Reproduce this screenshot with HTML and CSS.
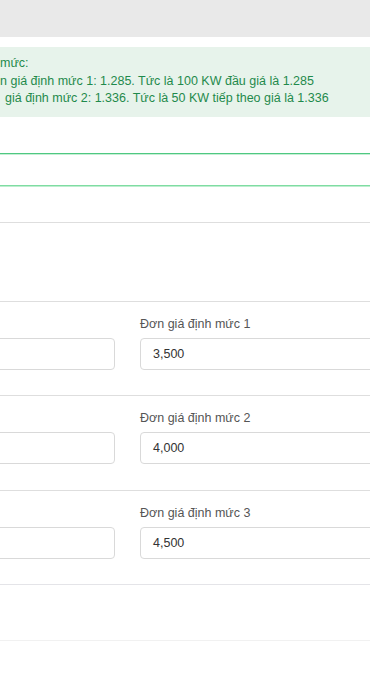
FILE: index.html
```html
<!DOCTYPE html>
<html lang="vi">
<head>
  <meta charset="UTF-8">
  <title>Đơn giá định mức</title>
  <link rel="stylesheet" href="styles.css">
</head>
<body>

  <div class="topbar"></div>

  <div class="notice">
    <div>mức:</div>
    <div>n giá định mức 1: 1.285. Tức là 100 KW đầu giá là 1.285</div>
    <div class="indent">giá định mức 2: 1.336. Tức là 50 KW tiếp theo giá là 1.336</div>
  </div>

  <div class="valid-field"></div>

  <div class="section blank"></div>

  <div class="section">
    <div class="row">
      <div class="input"></div>
      <div class="field">
        <label>Đơn giá định mức 1</label>
        <div class="input">3,500</div>
      </div>
    </div>
  </div>

  <div class="section">
    <div class="row">
      <div class="input"></div>
      <div class="field">
        <label>Đơn giá định mức 2</label>
        <div class="input">4,000</div>
      </div>
    </div>
  </div>

  <div class="section">
    <div class="row">
      <div class="input"></div>
      <div class="field">
        <label>Đơn giá định mức 3</label>
        <div class="input">4,500</div>
      </div>
    </div>
  </div>

  <div class="section footer"></div>

</body>
</html>
```

FILE: styles.css
```css
* {
  margin: 0;
  padding: 0;
  box-sizing: border-box;
}

body {
  width: 370px;
  overflow: hidden;
  background: #fff;
  font-family: 'Liberation Sans', Arial, sans-serif;
  font-size: 12.5px;
  color: #333;
}

.topbar {
  height: 37px;
  background: #e9e9e9;
}

.notice {
  margin-top: 10px;
  padding: 8px 0 9px;
  background: #e7f3eb;
  color: #1f8a4c;
  line-height: 17.5px;
  white-space: nowrap;
}

.notice .indent {
  padding-left: 5px;
}

/* green focus / valid state */
.valid-field {
  margin-top: 36px;
  height: 33px;
  border-top: 1px solid #4fc882;
  border-bottom: 1px solid #7fdca2;
  box-shadow: inset 0 1px 0 #c6efd5, 0 1px 0 #bdeecf;
}

.section {
  border-top: 1px solid #dedede;
  padding: 15px 0 25.5px;
}

.section.blank {
  margin-top: 36px;
  height: 79px;
  padding: 0;
}

.section.footer {
  height: 57px;
  padding: 0;
  border-top-color: #e4e4e8;
  border-bottom: 1px solid #f1f1f1;
}

.row {
  display: grid;
  grid-template-columns: 135px 260px;
  gap: 25px;
  margin-left: -20px;
  align-items: end;
}

.field label {
  display: block;
  height: 14px;
  margin-bottom: 7px;
  line-height: 14px;
  color: #555;
}

.input {
  height: 32px;
  padding: 0 12px;
  border: 1px solid #d9d9d9;
  border-radius: 4px;
  line-height: 30px;
  color: #333;
}
```
